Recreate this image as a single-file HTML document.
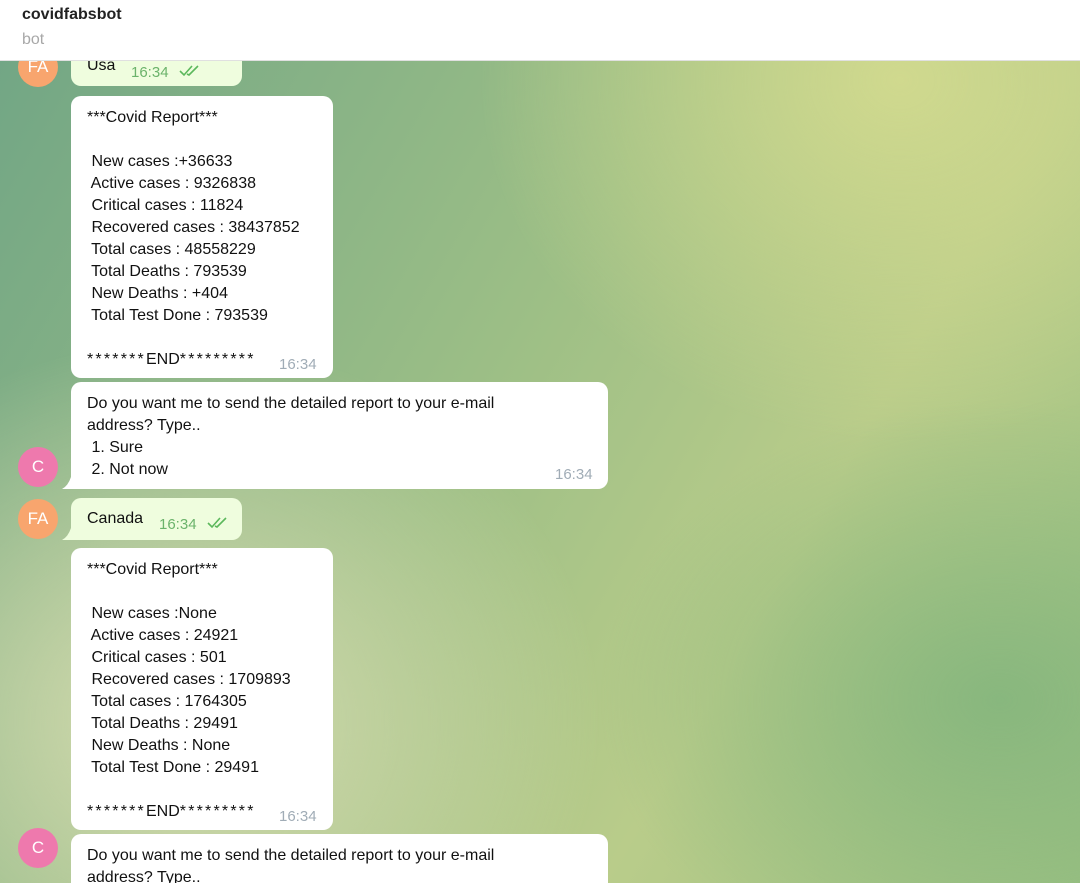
<!DOCTYPE html>
<html><head><meta charset="utf-8"><style>
*{margin:0;padding:0;box-sizing:border-box}
html,body{width:1080px;height:883px;overflow:hidden}
body{font-family:"Liberation Sans",sans-serif;position:relative;
background:
radial-gradient(ellipse 420px 360px at 900px 80px,#d0d98e 0%,rgba(208,217,142,0) 100%),
radial-gradient(ellipse 420px 380px at 180px 720px,#d6dcb0 0%,rgba(214,220,176,0) 100%),
radial-gradient(ellipse 400px 300px at 1000px 700px,#88b77e 0%,rgba(136,183,126,0) 100%),
linear-gradient(120deg,#70a585 0%,#9dbf86 45%,#b9cc8a 70%,#9cc182 100%);}
.hdr{position:absolute;left:0;top:0;width:1080px;height:61px;background:#fff;border-bottom:1px solid #e0e0e0}
.hdr .t{position:absolute;left:22px;top:6px;font-weight:bold;font-size:16px;color:#222}
.hdr .s{position:absolute;left:22px;top:31px;font-size:16px;color:#a8a8a8}
.b{position:absolute;background:#fff;border-radius:10px;font-size:16px;line-height:22px;color:#111;padding:11px 16px 9px;white-space:pre;overflow:hidden}
.g{background:#effdde}
.tm{position:absolute;font-size:15px;color:#a0acb6}
.g .tm{color:#6bb36b}
.av{position:absolute;width:40px;height:40px;border-radius:50%;color:#fff;font-size:17px;text-align:center;line-height:40px}
.fa{background:#f8a56e}.c{background:#ee79ad}
.tail{position:absolute;width:12px;height:12px}
.e{letter-spacing:2.2px}
</style></head><body>
<div class="av fa" style="left:18px;top:47px">FA</div>
<div class="b g" style="left:71px;top:46px;width:171px;height:40px;padding-top:9px;border-top-left-radius:0">Usa<span class="tm" style="left:60px;top:16px">16:34 <svg width="22" height="12" viewBox="0 0 22 12" style="margin-left:6px"><path d="M1 6l4 4 8-9M8 9l2 1 9-9" fill="none" stroke="#5cb85c" stroke-width="1.6"/></svg></span></div>
<div class="b" style="left:71px;top:96px;width:262px;height:282px">***Covid Report***

 New cases :+36633
 Active cases : 9326838
 Critical cases : 11824
 Recovered cases : 38437852
 Total cases : 48558229
 Total Deaths : 793539
 New Deaths : +404
 Total Test Done : 793539

<span class="e">*******</span>END<span class="e">*********</span><span class="tm" style="left:208px;top:258px">16:34</span></div>
<div class="b" style="left:71px;top:382px;width:537px;height:107px;border-bottom-left-radius:0">Do you want me to send the detailed report to your e-mail
address? Type..
 1. Sure
 2. Not now<span class="tm" style="left:484px;top:82px">16:34</span></div>
<div class="av c" style="left:18px;top:447px">C</div>
<div class="av fa" style="left:18px;top:499px">FA</div>
<div class="b g" style="left:71px;top:498px;width:171px;height:42px;padding-top:10px;border-bottom-left-radius:0">Canada<span class="tm" style="left:88px;top:16px">16:34 <svg width="22" height="12" viewBox="0 0 22 12" style="margin-left:6px"><path d="M1 6l4 4 8-9M8 9l2 1 9-9" fill="none" stroke="#5cb85c" stroke-width="1.6"/></svg></span></div>
<div class="b" style="left:71px;top:548px;width:262px;height:282px">***Covid Report***

 New cases :None
 Active cases : 24921
 Critical cases : 501
 Recovered cases : 1709893
 Total cases : 1764305
 Total Deaths : 29491
 New Deaths : None
 Total Test Done : 29491

<span class="e">*******</span>END<span class="e">*********</span><span class="tm" style="left:208px;top:258px">16:34</span></div>
<div class="b" style="left:71px;top:834px;width:537px;height:60px">Do you want me to send the detailed report to your e-mail
address? Type..</div>
<div class="av c" style="left:18px;top:828px">C</div>
<svg class="tail" style="left:62px;top:477px" viewBox="0 0 12 12"><path d="M9 0v12H0q6-3 9-12z" fill="#fff"/></svg>
<svg class="tail" style="left:62px;top:528px" viewBox="0 0 12 12"><path d="M9 0v12H0q6-3 9-12z" fill="#effdde"/></svg>
<div class="hdr"><div class="t">covidfabsbot</div><div class="s">bot</div></div>
</body></html>
